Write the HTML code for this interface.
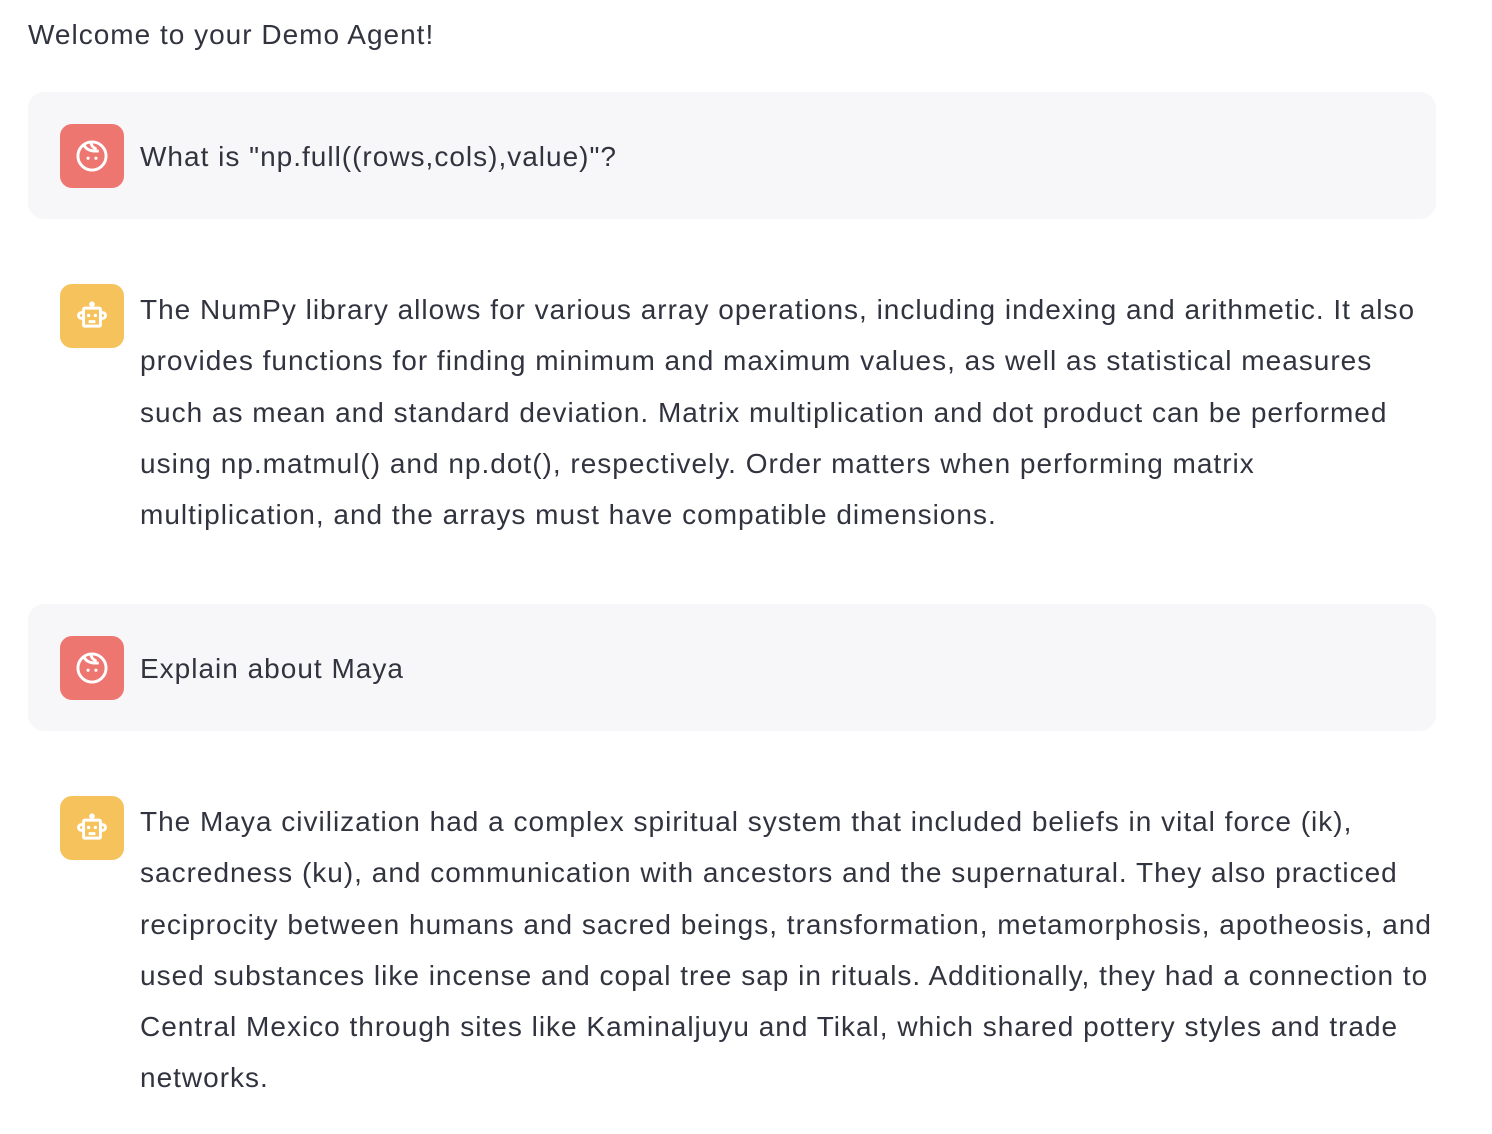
<!DOCTYPE html>
<html><head><meta charset="utf-8"><style>
body{margin:0;width:1492px;height:1134px;background:#fff;position:relative;overflow:hidden;font-family:"Liberation Sans",sans-serif;color:#31333f;font-size:28px;letter-spacing:1px}
.l{position:absolute;left:140px;height:51px;line-height:51px;white-space:nowrap}
.box{position:absolute;left:28px;width:1408px;height:127px;background:#f7f7f9;border-radius:16px}
.ic{position:absolute;left:60px;width:64px;height:64px;border-radius:12px}
.u{background:#ee7671}.a{background:#f6c25c}
.ic svg{position:absolute;left:14px;top:14px}
</style></head><body>
<div class="l" style="left:28px;top:9px">Welcome to your Demo Agent!</div>
<div class="box" style="top:92px"></div>
<div class="box" style="top:604px"></div>

<div class="ic u" style="top:124px"><svg width="36" height="36" viewBox="0 0 32 32" fill="none" stroke="#fff" stroke-width="2.6"><circle cx="16" cy="16" r="12.5"/><path d="M9 6.5c2 4 7 5.5 13 5M15 3.5c0 3 2 5 5 6.5"/><circle cx="12.5" cy="18" r="1.4" fill="#fff" stroke="none"/><circle cx="19.5" cy="18" r="1.4" fill="#fff" stroke="none"/></svg></div>
<div class="l" style="top:131px">What is "np.full((rows,cols),value)"?</div>

<div class="ic a" style="top:284px"><svg width="36" height="36" viewBox="0 0 32 32" fill="none" stroke="#fff" stroke-width="2.6"><rect x="8.5" y="9" width="15" height="16" rx="1"/><circle cx="16" cy="5.5" r="2.5" fill="#fff" stroke="none"/><path d="M8.5 13h-2a2.5 2.5 0 0 0 0 5h2M23.5 13h2a2.5 2.5 0 0 1 0 5h-2M13 21h6"/><circle cx="13" cy="15.5" r="1.5" fill="#fff" stroke="none"/><circle cx="19" cy="15.5" r="1.5" fill="#fff" stroke="none"/></svg></div>
<div class="l" style="top:284px">The NumPy library allows for various array operations, including indexing and arithmetic. It also</div>
<div class="l" style="top:335px">provides functions for finding minimum and maximum values, as well as statistical measures</div>
<div class="l" style="top:387px">such as mean and standard deviation. Matrix multiplication and dot product can be performed</div>
<div class="l" style="top:438px">using np.matmul() and np.dot(), respectively. Order matters when performing matrix</div>
<div class="l" style="top:489px">multiplication, and the arrays must have compatible dimensions.</div>

<div class="ic u" style="top:636px"><svg width="36" height="36" viewBox="0 0 32 32" fill="none" stroke="#fff" stroke-width="2.6"><circle cx="16" cy="16" r="12.5"/><path d="M9 6.5c2 4 7 5.5 13 5M15 3.5c0 3 2 5 5 6.5"/><circle cx="12.5" cy="18" r="1.4" fill="#fff" stroke="none"/><circle cx="19.5" cy="18" r="1.4" fill="#fff" stroke="none"/></svg></div>
<div class="l" style="top:643px">Explain about Maya</div>

<div class="ic a" style="top:796px"><svg width="36" height="36" viewBox="0 0 32 32" fill="none" stroke="#fff" stroke-width="2.6"><rect x="8.5" y="9" width="15" height="16" rx="1"/><circle cx="16" cy="5.5" r="2.5" fill="#fff" stroke="none"/><path d="M8.5 13h-2a2.5 2.5 0 0 0 0 5h2M23.5 13h2a2.5 2.5 0 0 1 0 5h-2M13 21h6"/><circle cx="13" cy="15.5" r="1.5" fill="#fff" stroke="none"/><circle cx="19" cy="15.5" r="1.5" fill="#fff" stroke="none"/></svg></div>
<div class="l" style="top:796px">The Maya civilization had a complex spiritual system that included beliefs in vital force (ik),</div>
<div class="l" style="top:847px">sacredness (ku), and communication with ancestors and the supernatural. They also practiced</div>
<div class="l" style="top:899px">reciprocity between humans and sacred beings, transformation, metamorphosis, apotheosis, and</div>
<div class="l" style="top:950px">used substances like incense and copal tree sap in rituals. Additionally, they had a connection to</div>
<div class="l" style="top:1001px">Central Mexico through sites like Kaminaljuyu and Tikal, which shared pottery styles and trade</div>
<div class="l" style="top:1052px">networks.</div>
</body></html>
